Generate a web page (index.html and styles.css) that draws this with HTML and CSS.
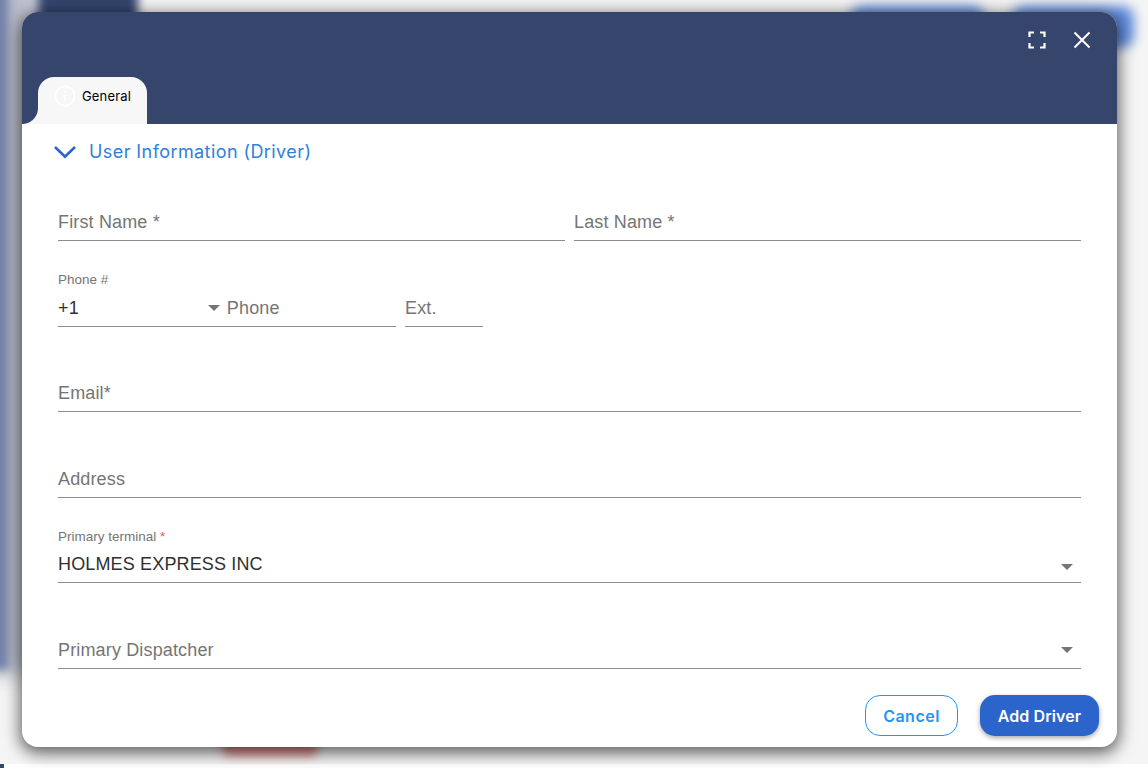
FILE: index.html
```html
<!DOCTYPE html>
<html lang="en">
<head>
<meta charset="utf-8">
<title>Add Driver</title>
<link rel="stylesheet" href="styles.css">
</head>
<body>
<div class="backdrop">
  <div class="blur gray"></div>
  <div class="blur side"></div>
  <div class="blur topbar"></div>
  <div class="blur pill one"></div>
  <div class="blur pill two"></div>
  <div class="blur red"></div>
</div>
<div class="corner"></div>
<main class="modal">
  <header class="modal-head">
    <div class="head-actions">
      <svg class="icon-full" width="18" height="18" viewBox="0 0 18 18" fill="none" stroke="#fff" stroke-width="2.2"><path d="M1.5 6V1.5H6M12 1.5h4.5V6M16.5 12v4.5H12M6 16.5H1.5V12"/></svg>
      <svg class="icon-close" width="18" height="18" viewBox="0 0 18 18" fill="none" stroke="#fff" stroke-width="2"><path d="M1.5 1.5l15 15M16.5 1.5l-15 15"/></svg>
    </div>
    <div class="tabs">
      <div class="tab">
        <svg class="tab-icon" width="22" height="22" viewBox="0 0 24 24" fill="none" stroke="#fff" stroke-width="2"><circle cx="12" cy="12" r="10.5"/><path d="M12 10.5v7M12 6.5v2"/></svg>
        <span>General</span>
      </div>
    </div>
  </header>
  <section class="modal-body">
    <div class="section-title">
      <svg width="22" height="14" viewBox="0 0 22 14" fill="none" stroke="#2a64cc" stroke-width="2.6"><path d="M1 2l10 9.8L21 2"/></svg>
      <h2>User Information (Driver)</h2>
    </div>
    <form class="form">
      <div class="row row-name">
        <div class="field"><span class="ph">First Name *</span></div>
        <div class="field"><span class="ph">Last Name *</span></div>
      </div>
      <div class="row row-phone">
        <div class="field labelled code">
          <label class="phone-label">Phone #</label>
          <div class="value-line"><span class="val">+1</span><i class="caret"></i><span class="ph phone-ph">Phone</span></div>
        </div>
        <div class="field ext"><span class="ph">Ext.</span></div>
      </div>
      <div class="row"><div class="field"><span class="ph">Email*</span></div></div>
      <div class="row"><div class="field"><span class="ph">Address</span></div></div>
      <div class="row">
        <div class="field labelled">
          <label>Primary terminal <b>*</b></label>
          <div class="value-line"><span class="val">HOLMES EXPRESS INC</span><i class="caret end"></i></div>
        </div>
      </div>
      <div class="row">
        <div class="field"><span class="ph">Primary Dispatcher</span><i class="caret end"></i></div>
      </div>
    </form>
    <div class="actions">
      <button type="button" class="btn cancel">Cancel</button>
      <button type="button" class="btn add">Add Driver</button>
    </div>
  </section>
</main>
</body>
</html>
```
FILE: styles.css
```css
* { box-sizing: border-box; }
html, body { margin: 0; height: 100%; }
body { width: 1148px; height: 768px; overflow: hidden; background: #fff; position: relative; font-family: "Liberation Sans", Arial, sans-serif; }

.backdrop { position: absolute; left: 0; top: 0; width: 1148px; height: 764px; background: #f5f5f5; overflow: hidden; }
.blur { position: absolute; }
.gray { left: -20px; top: -20px; width: 60px; height: 695px; background: #b9bdc9; filter: blur(10px); }
.side { left: -8px; top: -20px; width: 16px; height: 690px; background: #6f7fa6; filter: blur(5px); }
.topbar { left: 38px; top: -30px; width: 100px; height: 60px; background: #34466f; filter: blur(5px); }
.pill { background: #5f8bdc; border-radius: 12px; filter: blur(6px); }
.pill.one { left: 850px; top: 6px; width: 135px; height: 40px; }
.pill.two { left: 1012px; top: 6px; width: 122px; height: 42px; }
.red { left: 222px; top: 728px; width: 96px; height: 28px; background: #dc8d87; border-radius: 8px; filter: blur(5px); }
.corner { position: absolute; left: 0; top: 764px; width: 4px; height: 4px; background: #34466f; }

.modal { position: absolute; left: 22px; top: 12px; width: 1095px; height: 735px; background: #fff; border-radius: 16px; box-shadow: 0 4px 16px 2px rgba(0,0,0,.62); display: flex; flex-direction: column; overflow: hidden; }
.modal-head { height: 112px; background: #35456b; position: relative; flex: none; display: flex; flex-direction: column; justify-content: flex-end; }
.head-actions { position: absolute; top: 19px; right: 26px; display: flex; gap: 27px; }
.icon-full { width: 18px; height: 18px; }
.tabs { padding-left: 16px; }
.tab { width: 109px; height: 47px; background: #f7f7f7; border-radius: 16px 16px 0 0; display: flex; align-items: flex-start; padding: 8px 0 0 16px; gap: 6px; position: relative; font-family: Inter, sans-serif; font-size: 13px; color: #000; }
.tab::before { content: ""; position: absolute; left: -16px; bottom: 0; width: 16px; height: 16px; background: radial-gradient(circle at 0 0, #35456b 15.5px, #f7f7f7 16.5px); }
.tab span { line-height: 22px; letter-spacing: .15px; }
.tab-icon { flex: none; }

.modal-body { flex: 1; position: relative; padding: 16px 36px 0; }
.section-title { display: flex; align-items: center; gap: 13px; height: 24px; margin-left: -4px; }
.section-title h2 { margin: 0; font: 400 18px/24px Inter, sans-serif; color: #2f80de; letter-spacing: .42px; }

.form { display: flex; flex-direction: column; }
.row { display: flex; gap: 9px; height: 85.5px; align-items: flex-end; }
.row-name { height: 76.5px; }
.field { flex: 1; height: 32px; border-bottom: 1px solid #8c8c8c; position: relative; display: flex; align-items: flex-end; padding-bottom: 6px; font-size: 18px; }
.ph { color: #757575; line-height: 24px; letter-spacing: .15px; }
.val { color: #303030; line-height: 24px; letter-spacing: .15px; }
.labelled { height: 55px; display: block; padding: 0; }
.labelled label { display: block; font-size: 13.5px; line-height: 18px; color: #757575; }
.labelled .phone-label { line-height: 16px; }
.labelled label b { color: #ff4d4d; font-weight: 400; }
.value-line { display: flex; align-items: center; height: 24px; margin-top: 6px; position: relative; }
.phone-label + .value-line { margin-top: 8px; }
.code { flex: none; width: 338px; }
.ext { flex: none; width: 78px; }
.row-phone { height: 86px; }
.caret { width: 0; height: 0; border-left: 6px solid transparent; border-right: 6px solid transparent; border-top: 6px solid #757575; }
.code .caret { margin-left: 129px; }
.phone-ph { margin-left: 7px; }
.caret.end { position: absolute; right: 8px; bottom: 15px; }
.value-line .caret.end { bottom: 6px; }

.actions { position: absolute; right: 18px; bottom: 11px; display: flex; gap: 22px; }
.btn { height: 41px; border-radius: 15px; font: 600 16px/1 Inter, sans-serif; letter-spacing: .1px; padding: 0; cursor: pointer; }
.cancel { width: 93px; background: #fff; border: 1px solid #2196f3; color: #2196f3; letter-spacing: .5px; }
.add { width: 119px; background: #2b64cb; border: 0; color: #fff; box-shadow: 0 2px 5px rgba(0,0,0,.35); }
```
